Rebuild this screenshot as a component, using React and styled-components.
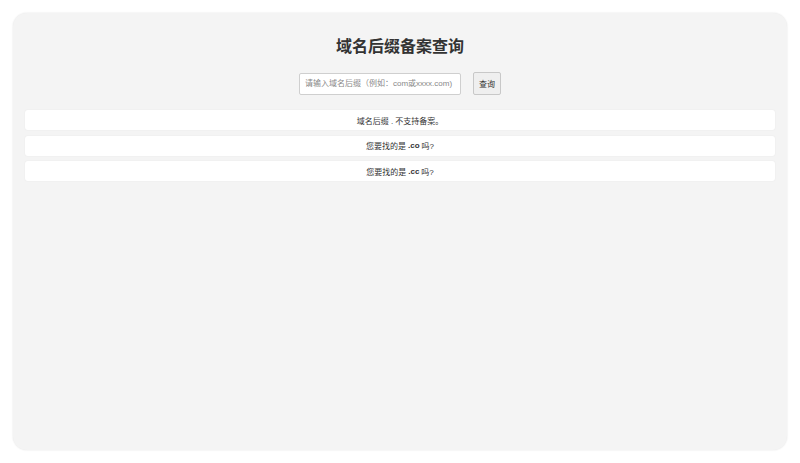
import React from "react";
import styled, { createGlobalStyle } from "styled-components";

const Global = createGlobalStyle`
  html, body { margin: 0; padding: 0; background: #ffffff; }
  body { font-family: "Liberation Sans", "Noto Sans CJK SC", sans-serif; color: #333; }
  * { box-sizing: border-box; }
`;

const Page = styled.div`
  padding: 13px 13px 13px 13px;
  height: 463px;
`;

const Card = styled.main`
  height: 437px;
  background: #f4f4f4;
  border-radius: 14px;
  box-shadow: 0 0 2px rgba(0, 0, 0, 0.12);
  padding: 24px 12px 0;
  display: flex;
  flex-direction: column;
  align-items: stretch;
`;

const Title = styled.h1`
  margin: 0;
  font-size: 16px;
  line-height: 20px;
  font-weight: bold;
  text-align: center;
  color: #333;
`;

const Form = styled.form`
  display: flex;
  justify-content: center;
  align-items: center;
  gap: 12px;
  margin-top: 15px;
  height: 23px;
`;

const Input = styled.input`
  width: 162px;
  height: 22px;
  border: 1px solid #cfcfcf;
  border-radius: 2px;
  background: #fff;
  padding: 0 3px 0 5px;
  font-family: inherit;
  font-size: 8px;
  color: #333;
  &::placeholder { color: #888; }
  outline: none;
`;

const Button = styled.button`
  width: 28px;
  height: 23px;
  border: 1px solid #c8c8c8;
  border-radius: 2px;
  background: #efefef;
  font-family: inherit;
  font-size: 8px;
  color: #333;
  padding: 0;
`;

const Results = styled.ul`
  list-style: none;
  margin: 15px 0 0;
  padding: 0;
  display: flex;
  flex-direction: column;
  gap: 5.5px;
`;

const Row = styled.li`
  height: 20px;
  background: #fff;
  border-radius: 3px;
  box-shadow: 0 0 2px rgba(0, 0, 0, 0.06);
  display: flex;
  align-items: center;
  justify-content: center;
  font-size: 8px;
  color: #333;
`;

const Ext = styled.b`
  font-weight: bold;
  margin: 0 2px;
`;

const suggestions = ["co", "cc"];

export default function App() {
  return (
    <>
      <Global />
      <Page>
        <Card>
          <Title>域名后缀备案查询</Title>
          <Form onSubmit={(e) => e.preventDefault()}>
            <Input placeholder="请输入域名后缀（例如：com或xxxx.com)" />
            <Button type="submit">查询</Button>
          </Form>
          <Results>
            <Row>域名后缀 . 不支持备案。</Row>
            {suggestions.map((s) => (
              <Row key={s}>
                您要找的是<Ext>.{s}</Ext>吗?
              </Row>
            ))}
          </Results>
        </Card>
      </Page>
    </>
  );
}
